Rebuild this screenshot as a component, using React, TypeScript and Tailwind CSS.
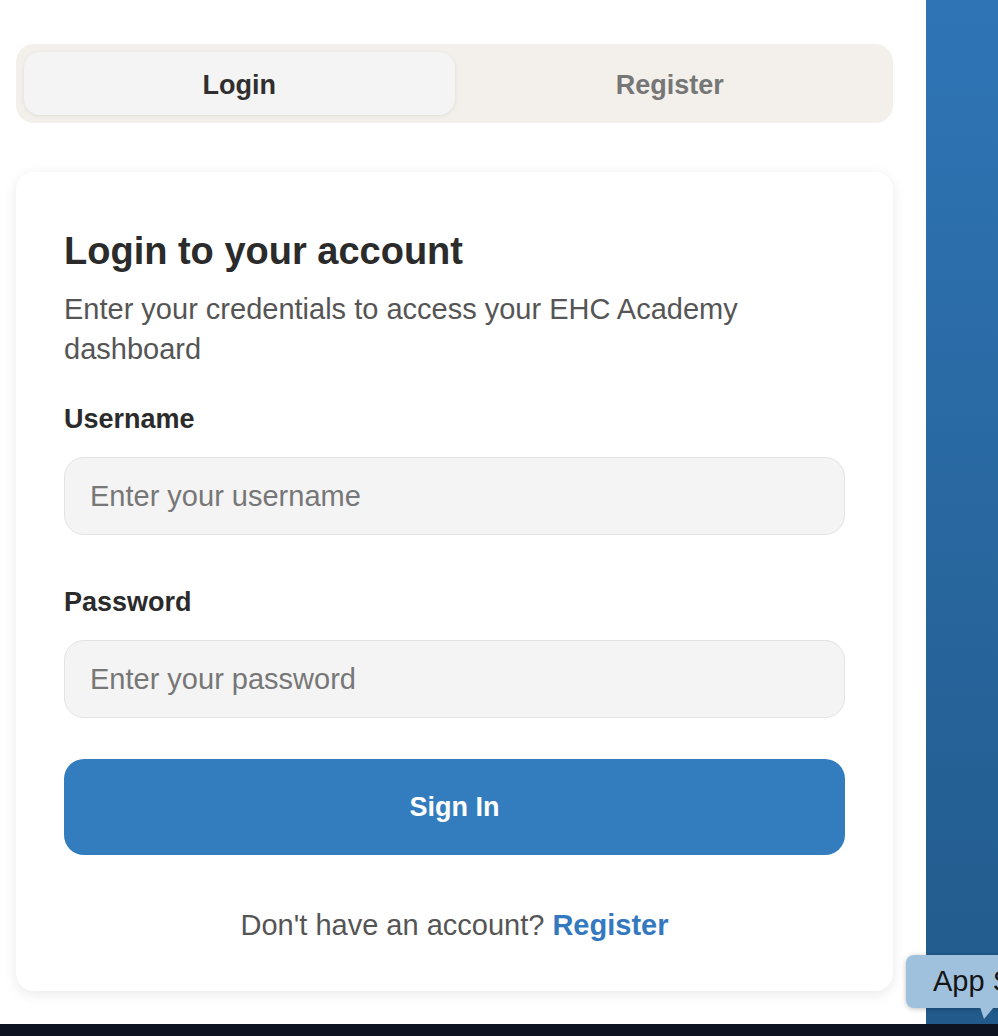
import { useState } from "react";

const font = { fontFamily: '"Liberation Sans", Arial, sans-serif' };

function AuthTabs({ tab, onChange }: { tab: string; onChange: (t: string) => void }) {
  return (
    <div className="grid grid-cols-2 rounded-[18px] bg-[#f3f0eb] p-2">
      {["Login", "Register"].map((t) => (
        <button
          key={t}
          onClick={() => onChange(t)}
          className={
            tab === t
              ? "h-[63px] rounded-[16px] bg-[#f4f4f4] pt-1 text-[27px] font-bold text-[#2f2f2f] shadow-[0_1px_4px_rgba(0,0,0,0.08)]"
              : "h-[63px] rounded-[16px] pt-1 text-[27px] font-bold text-[#767676]"
          }
        >
          {t}
        </button>
      ))}
    </div>
  );
}

function Field({ label, placeholder, type }: { label: string; placeholder: string; type: string }) {
  return (
    <div className="flex flex-col">
      <label className="text-[27px] font-bold leading-[40px] text-[#2b2b2b]">{label}</label>
      <input
        type={type}
        placeholder={placeholder}
        className="mt-[18px] h-[78px] w-full rounded-[20px] border-[1.5px] border-[#e3e3e3] bg-[#f4f4f4] px-[25px] text-[29px] text-[#333] outline-none placeholder:text-[#777]"
      />
    </div>
  );
}

export default function App() {
  const [tab, setTab] = useState("Login");

  return (
    <div style={font} className="relative flex h-[1036px] w-full flex-col overflow-hidden bg-white">
      <div className="flex flex-1">
        {/* left column */}
        <div className="w-[926px] bg-white pl-4 pt-[44px]">
          <div className="w-[877px]">
            <AuthTabs tab={tab} onChange={setTab} />

            <div className="mt-[49px] rounded-[18px] bg-white px-12 pb-[46px] pt-[57px] shadow-[0_3px_14px_rgba(0,0,0,0.09)]">
              <h1 className="text-[38px] font-bold leading-[44px] text-[#2b2b2b]">Login to your account</h1>
              <p className="mt-[16px] text-[29px] leading-[40px] text-[#555]">
                Enter your credentials to access your EHC Academy dashboard
              </p>

              <div className="mt-[30px]">
                <Field label="Username" placeholder="Enter your username" type="text" />
              </div>
              <div className="mt-[47px]">
                <Field label="Password" placeholder="Enter your password" type="password" />
              </div>

              <button className="mt-[41px] h-[96px] w-full rounded-[20px] bg-[#337cbe] text-[27px] font-bold text-white">
                Sign In
              </button>

              <p className="mt-[50px] text-center text-[29px] leading-[40px] text-[#555]">
                Don't have an account?{" "}
                <a href="#" className="font-bold text-[#3479c0]">
                  Register
                </a>
              </p>
            </div>
          </div>
        </div>

        {/* right column */}
        <div className="flex-1 bg-gradient-to-b from-[#2f75b6] to-[#225a8b]" />
      </div>

      <div className="h-[12px] bg-[#0d1321]" />

      {/* tooltip */}
      <div className="absolute left-[906px] top-[955px]">
        <div className="flex h-[53px] w-[130px] items-center rounded-[8px] bg-[#a0c1de] pl-[27px] text-[29px] text-[#151515] shadow-[0_1px_5px_rgba(0,0,0,0.25)]">
          App S
        </div>
        <div className="absolute left-[74px] top-[52px] h-0 w-0 border-l-[4px] border-r-[10px] border-t-[12px] border-l-transparent border-r-transparent border-t-[#a0c1de]" />
      </div>
    </div>
  );
}
